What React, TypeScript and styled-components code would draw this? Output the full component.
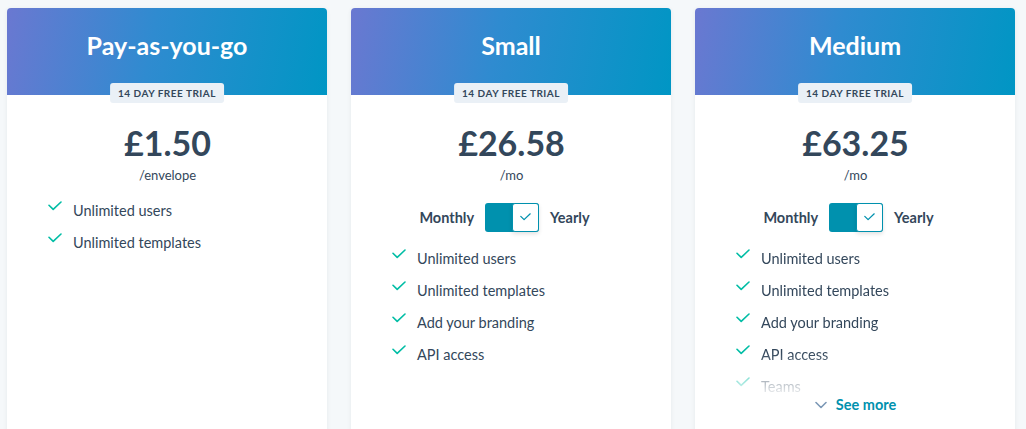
import React from 'react';
import styled, { createGlobalStyle } from 'styled-components';

const GlobalStyle = createGlobalStyle`
  html, body {
    margin: 0;
    padding: 0;
    background: #f5f8fa;
    font-family: 'Lato', 'Open Sans', sans-serif;
    color: #33475b;
    overflow: hidden;
  }
`;

const Page = styled.div`
  display: grid;
  grid-template-columns: repeat(3, 320px);
  gap: 24px;
  padding: 8px 7px 0;
`;

const Card = styled.div`
  background: #fff;
  border-radius: 4px 4px 0 0;
  box-shadow: 0 1px 4px rgba(45, 62, 80, 0.08);
  min-height: 440px;
  display: flex;
  flex-direction: column;
`;

const Header = styled.div`
  position: relative;
  height: 87px;
  border-radius: 4px 4px 0 0;
  background: linear-gradient(100deg, #6a78d1 0%, #2f8bd0 45%, #0096c4 100%);
  display: flex;
  justify-content: center;
  padding-top: 22px;
  box-sizing: border-box;
`;

const Title = styled.h2`
  margin: 0;
  font-size: 25px;
  line-height: 30px;
  font-weight: 700;
  color: #fff;
`;

const Badge = styled.span`
  position: absolute;
  left: 50%;
  bottom: -8px;
  transform: translateX(-50%);
  background: #eaf0f6;
  border-radius: 3px;
  padding: 0 8px;
  height: 20px;
  line-height: 20px;
  font-size: 10px;
  font-weight: 700;
  letter-spacing: 0.5px;
  color: #33475b;
  white-space: nowrap;
`;

const Body = styled.div`
  padding: 28px 40px 0 41px;
  display: flex;
  flex-direction: column;
  align-items: center;
`;

const Price = styled.div`
  font-size: 34px;
  line-height: 40px;
  font-weight: 700;
`;

const Per = styled.div`
  margin-top: 3px;
  font-size: 13px;
  line-height: 18px;
`;

const Toggle = styled.div`
  margin-top: 19px;
  display: flex;
  align-items: center;
  gap: 11px;
  margin-left: -14px;
`;

const ToggleLabel = styled.span`
  font-size: 14.5px;
  font-weight: 700;
`;

const Switch = styled.div`
  width: 54px;
  height: 29px;
  display: flex;
  justify-content: flex-end;
  background: #0091ae;
  border-radius: 3px;
`;

const Knob = styled.div`
  width: 27px;
  height: 29px;
  box-sizing: border-box;
  border: 1.5px solid #0091ae;
  border-radius: 3px;
  background: #fff;
  display: flex;
  align-items: center;
  justify-content: center;
  box-shadow: 0 2px 4px rgba(0, 0, 0, 0.12);
`;

const List = styled.ul<{ $fade?: boolean }>`
  list-style: none;
  margin: 11px 0 0;
  padding: 0;
  align-self: stretch;
  ${(p) =>
    p.$fade &&
    `
    -webkit-mask-image: linear-gradient(to bottom, #000 110px, rgba(0,0,0,0.12) 150px, transparent 156px);
    mask-image: linear-gradient(to bottom, #000 110px, rgba(0,0,0,0.12) 150px, transparent 156px);
  `}
`;

const Item = styled.li`
  display: flex;
  align-items: flex-start;
  gap: 11px;
  height: 32px;
  padding-top: 7px;
  box-sizing: border-box;
  font-size: 14.5px;
  line-height: 18px;
`;

const CheckIcon = styled.svg`
  flex: none;
  margin-top: -1px;
`;

const SeeMore = styled.button`
  margin-top: -7px;
  position: relative;
  border: none;
  background: none;
  padding: 0;
  display: flex;
  align-items: center;
  gap: 9px;
  font-family: inherit;
  font-size: 14.5px;
  line-height: 18px;
  font-weight: 700;
  color: #0091ae;
  cursor: pointer;
`;

const Check = ({ color = '#00bda5', size = 14 }: { color?: string; size?: number }) => (
  <CheckIcon width={size} height={size * 0.72} viewBox="0 0 14 10" fill="none">
    <path d="M1 4.2 L5.2 8.4 L13 1" stroke={color} strokeWidth="1.6" strokeLinecap="round" strokeLinejoin="round" />
  </CheckIcon>
);

type Plan = {
  name: string;
  price: string;
  per: string;
  toggle: boolean;
  features: string[];
  more?: boolean;
};

const plans: Plan[] = [
  { name: 'Pay-as-you-go', price: '£1.50', per: '/envelope', toggle: false, features: ['Unlimited users', 'Unlimited templates'] },
  {
    name: 'Small',
    price: '£26.58',
    per: '/mo',
    toggle: true,
    features: ['Unlimited users', 'Unlimited templates', 'Add your branding', 'API access'],
  },
  {
    name: 'Medium',
    price: '£63.25',
    per: '/mo',
    toggle: true,
    features: ['Unlimited users', 'Unlimited templates', 'Add your branding', 'API access', 'Teams'],
    more: true,
  },
];

const App: React.FC = () => {
  return (
    <>
      <GlobalStyle />
      <Page>
        {plans.map((plan) => (
          <Card key={plan.name}>
            <Header>
              <Title>{plan.name}</Title>
              <Badge>14 DAY FREE TRIAL</Badge>
            </Header>
            <Body>
              <Price>{plan.price}</Price>
              <Per>{plan.per}</Per>
              {plan.toggle && (
                <Toggle>
                  <ToggleLabel>Monthly</ToggleLabel>
                  <Switch>
                    <Knob>
                      <Check color="#0091ae" size={11} />
                    </Knob>
                  </Switch>
                  <ToggleLabel>Yearly</ToggleLabel>
                </Toggle>
              )}
              <List $fade={plan.more}>
                {plan.features.map((f) => (
                  <Item key={f}>
                    <Check />
                    <span>{f}</span>
                  </Item>
                ))}
              </List>
              {plan.more && (
                <SeeMore>
                  <svg width="12" height="8" viewBox="0 0 12 8" fill="none">
                    <path d="M1 1.5 L6 6.5 L11 1.5" stroke="#7c98b6" strokeWidth="1.6" strokeLinecap="round" strokeLinejoin="round" />
                  </svg>
                  See more
                </SeeMore>
              )}
            </Body>
          </Card>
        ))}
      </Page>
    </>
  );
};

export default App;
